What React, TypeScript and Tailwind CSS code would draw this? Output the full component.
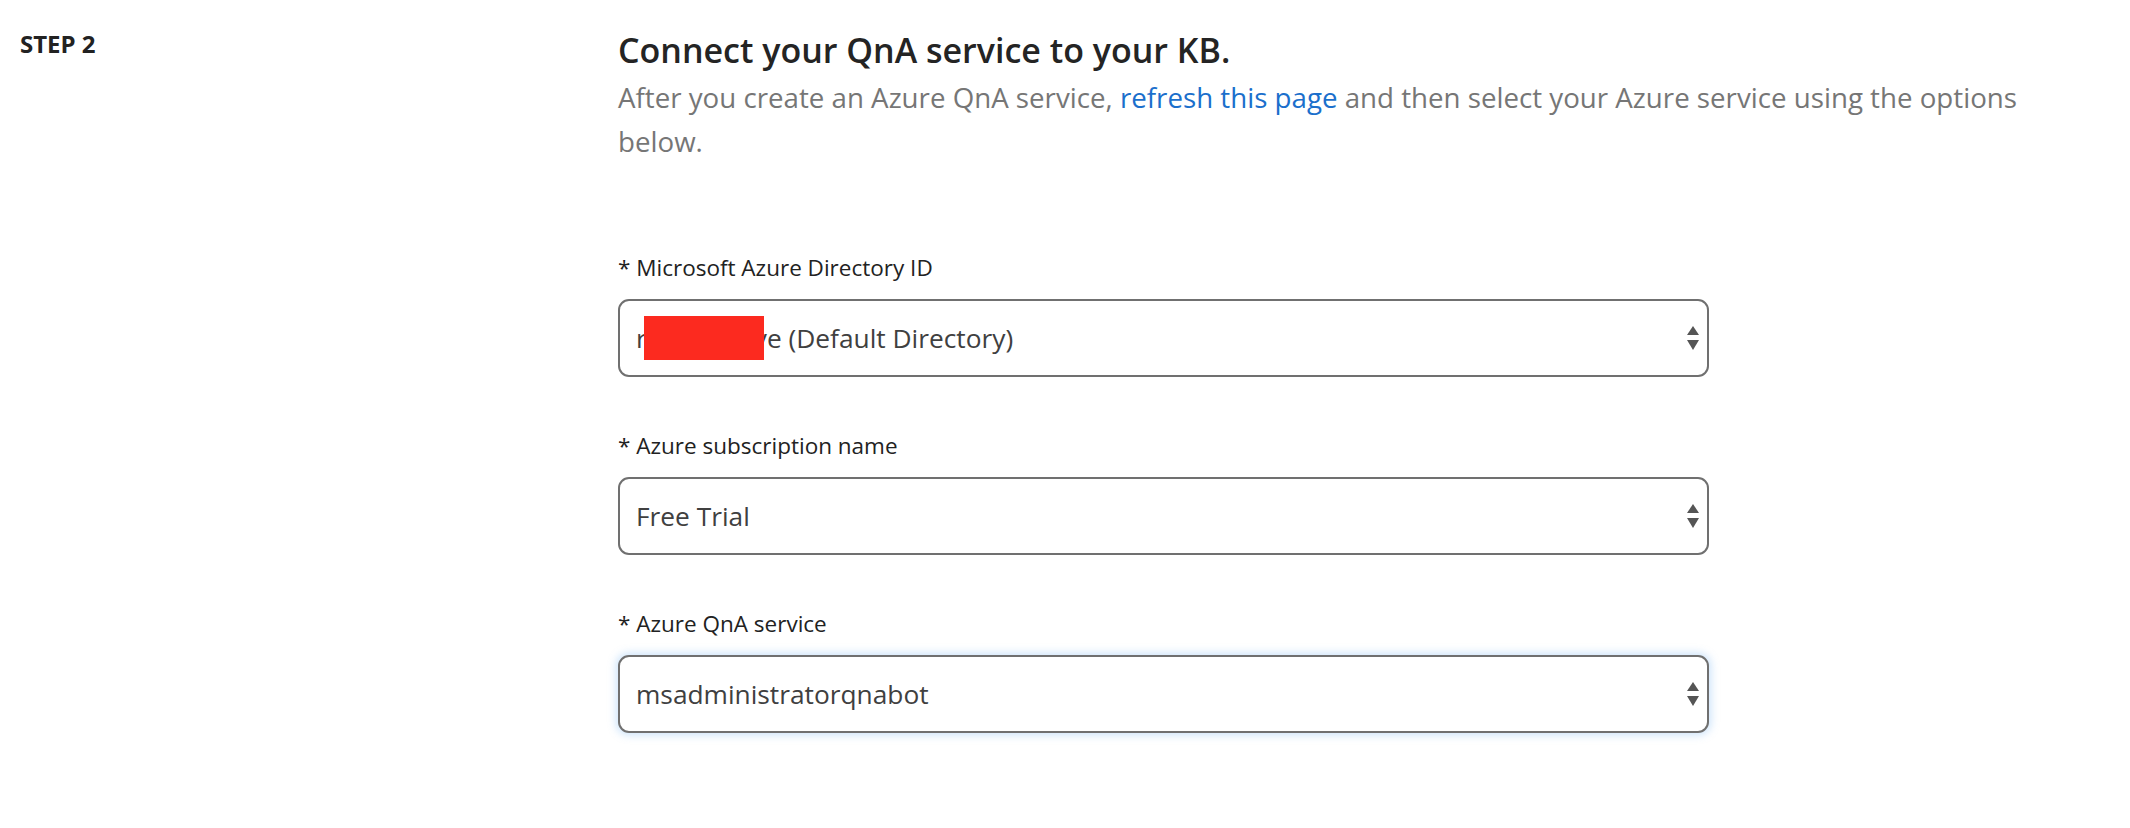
import React from 'react';

const font = { fontFamily: '"Open Sans", "Noto Sans", sans-serif' };

const Arrows: React.FC = () => (
  <svg width="14" height="26" viewBox="0 0 14 26" className="shrink-0">
    <path d="M1 10 L7 1 L13 10 Z" fill="#555" />
    <path d="M1 15 L13 15 L7 25 Z" fill="#555" />
  </svg>
);

type FieldProps = {
  label: string;
  focused?: boolean;
  children: React.ReactNode;
};

const Field: React.FC<FieldProps> = ({ label, focused, children }) => (
  <div className="mb-[54px]">
    <div className="text-[22.5px] leading-[30px] text-[#222] mb-[16px]">* {label}</div>
    <div
      className={
        'w-[1091px] h-[78px] rounded-[11px] border-2 border-[#707070] bg-white flex items-center justify-between pl-[16px] pr-[7px] ' +
        (focused ? 'shadow-[0_0_8px_2px_rgba(110,175,240,0.35)]' : '')
      }
    >
      <div className="text-[26.3px] leading-[36px] text-[#404040] whitespace-nowrap flex items-center">{children}</div>
      <Arrows />
    </div>
  </div>
);

export default function App() {
  return (
    <div className="w-[2130px] h-[828px] bg-white flex" style={font}>
      <div className="w-[618px] shrink-0 pl-[20px] pt-[29px]">
        <div className="text-[24px] leading-[30px] font-bold text-[#222]">STEP 2</div>
      </div>

      <div className="flex-1 pt-[28px]">
        <h1 className="text-[34px] leading-[44px] font-semibold text-[#242424]">Connect your QnA service to your KB.</h1>
        <p className="mt-[3px] w-[1460px] text-[27.7px] leading-[44px] text-[#767676]">
          After you create an Azure QnA service,{' '}
          <a className="text-[#1b6fcc]">refresh this page</a> and then select your Azure service using the options
          below.
        </p>

        <div className="mt-[90px]">
          <Field label="Microsoft Azure Directory ID">
            <span>r</span>
            <span className="relative z-10 inline-block w-[120px] h-[44px] bg-[#fc2a1f] ml-[-3px] mr-[-10px]" />
            <span>ve (Default Directory)</span>
          </Field>
          <Field label="Azure subscription name">
            <span>Free Trial</span>
          </Field>
          <Field label="Azure QnA service" focused>
            <span>msadministratorqnabot</span>
          </Field>
        </div>
      </div>
    </div>
  );
}
